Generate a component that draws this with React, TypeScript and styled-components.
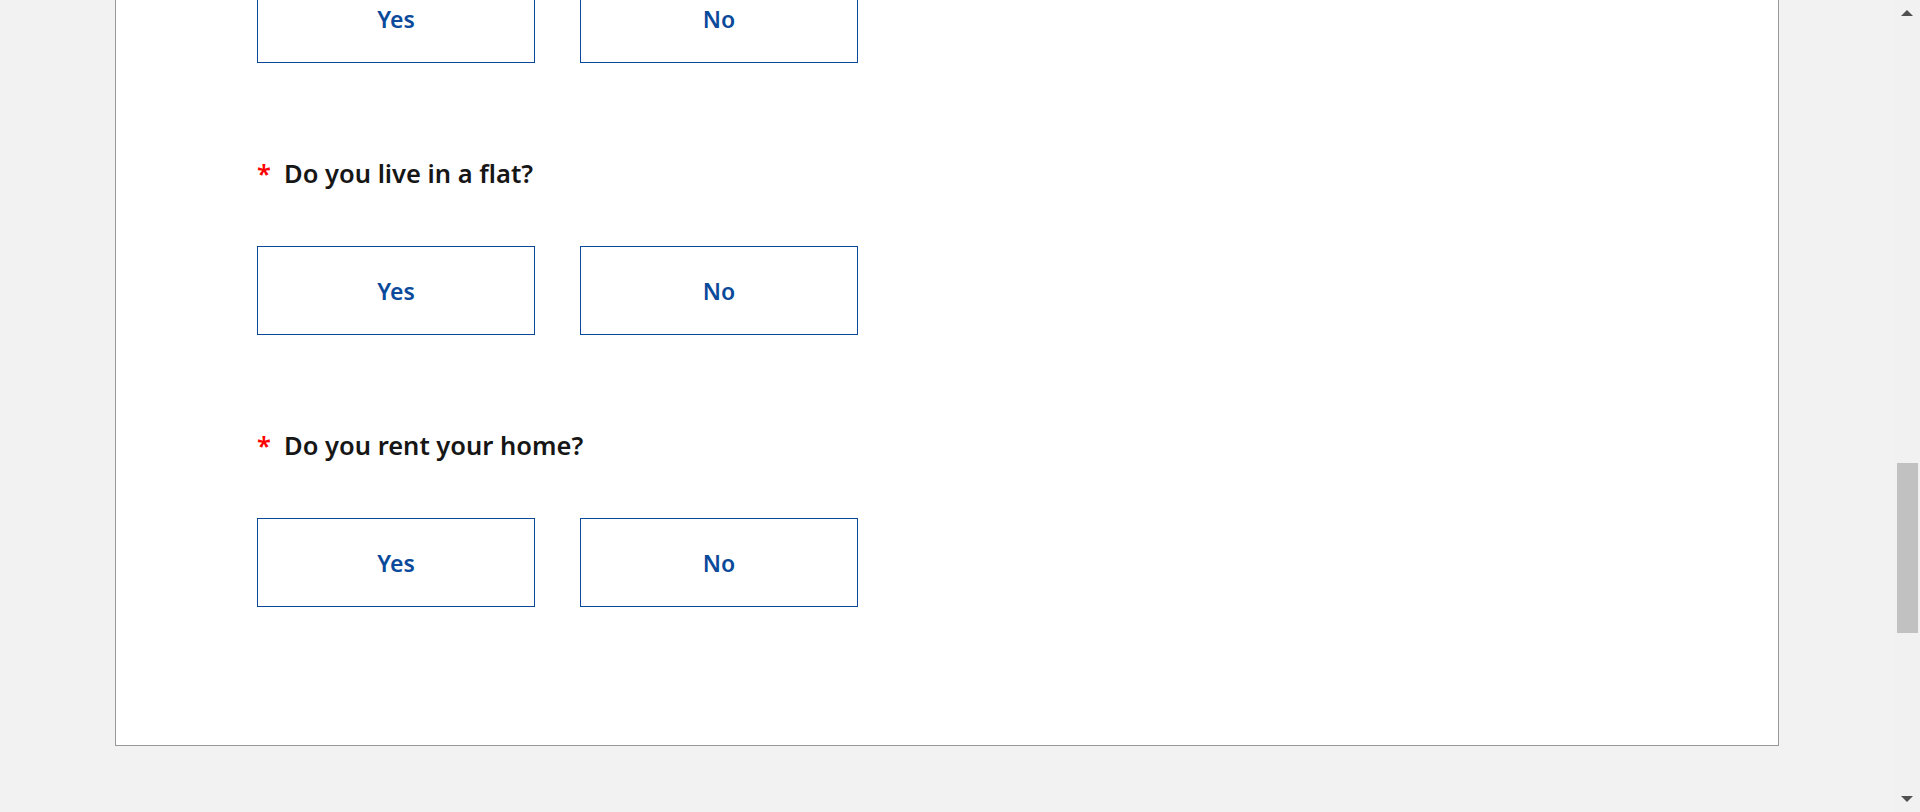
import { useLayoutEffect, useRef } from "react";
import styled, { createGlobalStyle } from "styled-components";

const GlobalStyle = createGlobalStyle`
  html, body {
    margin: 0;
    padding: 0;
    background: #f2f2f2;
    overflow: hidden;
  }
  body {
    font-family: "Noto Sans", "Liberation Sans", Arial, sans-serif;
  }
`;

const Screen = styled.div`
  display: flex;
  height: 100vh;
`;

const Viewport = styled.div`
  flex: 1;
  height: 100%;
  overflow: hidden;
`;

const Page = styled.div`
  padding: 40px 115px 68px;
`;

const Card = styled.div`
  background: #ffffff;
  border: 1px solid #999999;
  padding: 40px 0 138px 141px;
  display: flex;
  flex-direction: column;
  gap: 94px;
`;

const Question = styled.div`
  display: flex;
  flex-direction: column;
  gap: 57px;
`;

const Label = styled.div`
  display: flex;
  align-items: center;
  height: 32px;
  font-size: 25.5px;
  font-weight: 600;
  color: #161616;
`;

const Required = styled.span`
  color: #ff0000;
  width: 27px;
  flex: none;
`;

const Options = styled.div`
  display: flex;
  gap: 45px;
`;

const Option = styled.button`
  width: 278px;
  height: 89px;
  box-sizing: border-box;
  background: #ffffff;
  border: 1px solid #0b4a9b;
  border-radius: 0;
  color: #0b4a9b;
  font-family: inherit;
  font-size: 23px;
  font-weight: 600;
  cursor: pointer;
`;

const Scrollbar = styled.div`
  width: 26px;
  flex: none;
  display: flex;
  flex-direction: column;
  background: #f1f1f1;
`;

const Arrow = styled.div<{ $down?: boolean }>`
  height: 26px;
  flex: none;
  display: flex;
  align-items: center;
  justify-content: center;
  &::before {
    content: "";
    width: 0;
    height: 0;
    border-left: 6px solid transparent;
    border-right: 6px solid transparent;
    ${(p) =>
      p.$down
        ? "border-top: 6px solid #505050;"
        : "border-bottom: 6px solid #505050;"}
  }
`;

const Track = styled.div`
  flex: 1;
  display: flex;
  flex-direction: column;
`;

const Thumb = styled.div`
  height: 170px;
  margin: 0 2px 0 3px;
  background: #c1c1c1;
`;

const questions = [
  "Do you live in the UK?",
  "Do you live in a flat?",
  "Do you rent your home?",
];

const SCROLL_TOP = 196;

export default function App() {
  const viewRef = useRef<HTMLDivElement>(null);

  useLayoutEffect(() => {
    if (viewRef.current) viewRef.current.scrollTop = SCROLL_TOP;
  }, []);

  return (
    <>
      <GlobalStyle />
      <Screen>
        <Viewport ref={viewRef}>
          <Page>
            <Card>
              {questions.map((q) => (
                <Question key={q}>
                  <Label>
                    <Required>*</Required>
                    {q}
                  </Label>
                  <Options>
                    <Option type="button">Yes</Option>
                    <Option type="button">No</Option>
                  </Options>
                </Question>
              ))}
            </Card>
          </Page>
        </Viewport>
        <Scrollbar>
          <Arrow />
          <Track>
            <Thumb style={{ marginTop: 437 }} />
          </Track>
          <Arrow $down />
        </Scrollbar>
      </Screen>
    </>
  );
}
